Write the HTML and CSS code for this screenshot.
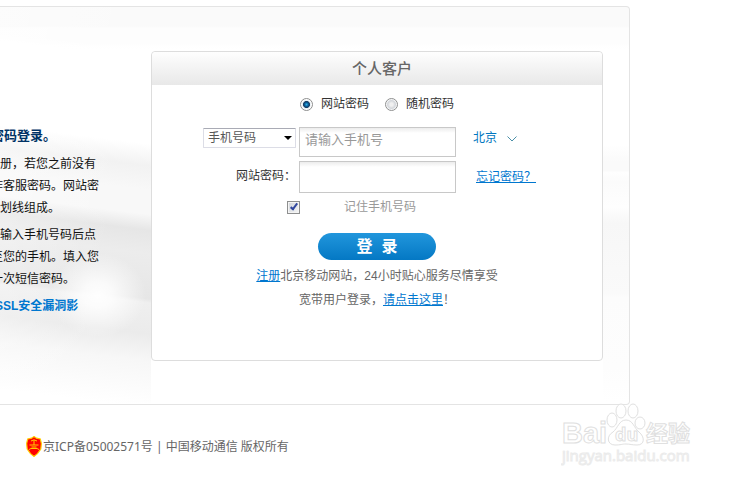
FILE: index.html
```
<!DOCTYPE html>
<html lang="zh-CN">
<head>
    <meta charset="UTF-8">
    <meta name="viewport" content="width=device-width, initial-scale=1.0">
    <title>个人客户登录</title>
    <link rel="stylesheet" href="styles.css">
</head>
<body>

    <div class="main">
        <!-- Notice -->
        <div class="notice">
            <h2>密码登录。</h2>
            <p>
                <span class="line indent">册，若您之前没有</span>
                <span class="line">作客服密码。网站密</span>
                <span class="line indent">划线组成。</span>
            </p>
            <p>
                <span class="line indent">输入手机号码后点</span>
                <span class="line">至您的手机。填入您</span>
                <span class="line">一次短信密码。</span>
            </p>
            <a href="#" class="notice-link">SSL安全漏洞影</a>
        </div>

        <!-- Login box -->
        <div class="login">
            <form class="login-box">
                <h1>个人客户</h1>
                <div class="type-row">
                    <label><input type="radio" name="pwdType" checked>网站密码</label>
                    <label><input type="radio" name="pwdType">随机密码</label>
                </div>
                <div class="fields">
                    <div class="select-wrap">
                        <select id="accountType" aria-label="账号类型">
                            <option>手机号码</option>
                            <option>电子邮箱</option>
                        </select>
                    </div>
                    <input type="text" id="account" aria-label="手机号" placeholder="请输入手机号">
                    <a href="#" class="city">北京
                        <svg width="10" height="6" viewBox="0 0 10 6"><path d="M0.5 0.5 L5 5 L9.5 0.5" fill="none" stroke="#4a8fa8"/></svg>
                    </a>
                    <label class="field-label" for="password">网站密码：</label>
                    <input type="password" id="password">
                    <a href="#" class="forget">忘记密码？</a>
                </div>
                <div class="remember">
                    <input type="checkbox" id="remember" checked>
                    <label for="remember">记住手机号码</label>
                </div>
                <button type="button" class="login-btn">登&nbsp;&nbsp;录</button>
                <p class="tip"><a href="#">注册</a>北京移动网站，24小时贴心服务尽情享受</p>
                <p class="tip">宽带用户登录，<a href="#">请点击这里</a>！</p>
            </form>
        </div>
    </div>

    <!-- Footer -->
    <div class="footer">
        <svg class="badge" width="16" height="21" viewBox="0 0 16 21">
            <path d="M8 0.6 L10.5 2.2 L14.3 3 L15.4 7.5 L14.8 13 L11.5 17.6 L8 20.4 L4.5 17.6 L1.2 13 L0.6 7.5 L1.7 3 L5.5 2.2 Z" fill="#f00" stroke="#fc0" stroke-width="1.2"/>
            <path d="M5 5 L8 3.8 L11 5 M8 4 V9 M3.5 9 H12.5 M5.5 11 H10.5 M3 13.5 L5 12.5 H11 L13 13.5" fill="none" stroke="#fc0"/>
        </svg>
        <span>京ICP备05002571号 | 中国移动通信 版权所有</span>
        <svg class="watermark" width="134" height="66" viewBox="0 0 134 66">
            <g fill="#fff" stroke="#e0e0e0">
                <text x="1" y="40" class="wm-name">Bai</text>
                <path d="M65 17 C58 17 57 25 52 29 C45 33 46 42 54 42 C60 42 61 41 65 41 C69 41 71 42 76 42 C84 42 84 34 78 29 C73 25 72 17 65 17 Z"/>
                <ellipse cx="51" cy="17" rx="5" ry="7"/>
                <ellipse cx="60" cy="8" rx="5" ry="7"/>
                <ellipse cx="72" cy="8" rx="5" ry="7"/>
                <ellipse cx="79" cy="20" rx="5" ry="6"/>
                <text x="54" y="38" class="wm-du">du</text>
                <text x="85" y="38" class="wm-cn">经验</text>
                <text x="1" y="58" class="wm-url">jingyan.baidu.com</text>
            </g>
        </svg>
    </div>

</body>
</html>
```
FILE: styles.css
```
body {
    margin: 0;
    padding-top: 6px;
    font-family: "Liberation Sans", "Noto Sans CJK SC", sans-serif;
    font-size: 12px;
    background-color: #fff;
    color: #666;
}
h1, h2, p {
    margin: 0;
}
a {
    color: #0077cf;
}
.main {
    display: flex;
    margin-right: 104px;
    padding-bottom: 1px;
    border: 1px solid #e4e4e4;
    border-left: none;
    border-radius: 0 4px 4px 0;
    overflow: hidden;
    background: linear-gradient(#fafafa 0, #fafafa 19px, #fdfdfd 21px, #fdfdfd 36px, #fff 42px, #fff 138px, #fafafa 155px, #fafafa 164px, #fefefe 165px, #fbfbfb 175px, #fefefe 200px, #f7f7f7 216px, #fafafa 286px, #fcfcfc 290px, #fdfdfd 360px, #fff 395px);
}

/* Notice */
.notice {
    flex: 0 0 160px;
    box-sizing: border-box;
    margin-left: -9px;
    padding-top: 118px;
    color: #111;
    background:
        radial-gradient(ellipse 48px 42px at 107px 288px, rgba(255, 255, 255, 0.95) 0, rgba(255, 255, 255, 0.8) 30%, rgba(255, 255, 255, 0) 100%),
        linear-gradient(100deg, rgba(255, 255, 255, 0.4), rgba(255, 255, 255, 0) 70%),
        linear-gradient(187deg, #fff0 0, #fff0 42px, #fff 52px, #fff 136px, #f2f2f2 158px, #f8f8f8 182px, #f8f8f8 206px, #e6e6e6 222px, #ececec 245px, #e6e6e6 290px, #efefef 294px, #ebebeb 325px, #f7f7f7 352px, #fff 398px);
}
.notice h2 {
    margin-bottom: 6px;
    font-size: 13px;
    line-height: 22px;
    color: #036;
}
.notice p {
    margin-bottom: 5px;
}
.line {
    display: block;
    line-height: 22px;
    white-space: nowrap;
}
.indent {
    padding-left: 9px;
}
.notice-link {
    display: block;
    padding-left: 4px;
    line-height: 22px;
    font-weight: bold;
    text-decoration: none;
}

/* Login box */
.login {
    flex: 1;
    margin: 44px 26px 0 0;
    padding-bottom: 42px;
    background-color: #fff;
}
.login-box {
    padding-bottom: 48px;
    border: 1px solid #ddd;
    border-radius: 4px;
    background-color: #fff;
}
.login-box h1 {
    padding-left: 10px;
    font-size: 15px;
    font-weight: 500;
    line-height: 33px;
    text-align: center;
    border-radius: 4px 4px 0 0;
    background: linear-gradient(#fefefe, #e8e8e8);
}
.type-row {
    display: flex;
    justify-content: center;
    gap: 16px;
    margin-bottom: 4px;
    line-height: 38px;
    color: #333;
}
.type-row label {
    display: flex;
    align-items: center;
    gap: 8px;
}
.type-row input {
    appearance: none;
    box-sizing: border-box;
    width: 13px;
    height: 13px;
    margin: 0;
    border: 1px solid #8e8f8f;
    border-radius: 50%;
    background: radial-gradient(#f0f0f0 20%, #d2d5da 50%, #fff 70%);
}
.type-row input:checked {
    background: radial-gradient(circle at 50% 50%, #2fb4e8 0, #0c5a94 25%, #153c62 40%, #e8eef2 50%, #fff 65%);
}
.fields {
    display: grid;
    grid-template-columns: 1fr 157px 1fr;
    gap: 4px 3px;
    padding-left: 1px;
}
.fields input {
    box-sizing: border-box;
    width: 100%;
    height: 30px;
    padding: 0 5px 6px;
    border: 1px solid #c8c8c8;
    font: inherit;
    font-size: 13px;
    background: linear-gradient(#ececec, #fff 5px);
}
.fields #password {
    height: 32px;
}
.fields input::placeholder {
    color: #999;
}
.select-wrap {
    position: relative;
    justify-self: end;
    width: 93px;
    padding-top: 1px;
}
.select-wrap::after {
    content: "";
    position: absolute;
    top: 9px;
    right: 4px;
    border: 4px solid transparent;
    border-top-color: #000;
    border-bottom: none;
    pointer-events: none;
}
.select-wrap select {
    appearance: none;
    width: 100%;
    height: 20px;
    padding: 0 4px;
    border: 1px solid #dcdde6;
    border-top-color: #a9abb5;
    border-radius: 1px;
    font: inherit;
    color: #555;
    background-color: #fff;
}
.city {
    padding-left: 14px;
    line-height: 22px;
    color: #0077c0;
    text-decoration: none;
}
.city svg {
    margin-left: 7px;
}
.field-label {
    justify-self: end;
    line-height: 30px;
    color: #333;
}
.forget {
    padding-left: 17px;
    line-height: 32px;
}
.remember {
    display: flex;
    align-items: center;
    gap: 44px;
    padding-left: 30%;
    line-height: 28px;
    color: #999;
}
.remember input {
    appearance: none;
    box-sizing: border-box;
    width: 13px;
    height: 13px;
    margin: 0;
    border: 1px solid #8e8f8f;
    background: linear-gradient(135deg, #cfd3d9, #f6f6f6);
    box-shadow: inset 0 0 0 1px #f4f4f4;
    position: relative;
}
.remember input:checked::after {
    content: "";
    position: absolute;
    left: 4px;
    top: 0;
    width: 2px;
    height: 6px;
    border: solid #31479e;
    border-width: 0 2px 2px 0;
    transform: rotate(38deg);
}
.login-btn {
    display: block;
    width: 118px;
    height: 27px;
    margin: 12px auto 4px;
    padding: 0;
    border: none;
    border-radius: 14px;
    font: inherit;
    font-size: 16px;
    font-weight: bold;
    line-height: 27px;
    color: #fff;
    background: linear-gradient(#2196dc, #0478c4);
    cursor: pointer;
}
.tip {
    line-height: 24px;
    text-align: center;
}

/* Footer */
.footer {
    position: relative;
    display: flex;
    align-items: center;
    gap: 1px;
    padding: 31px 0 25px 26px;
    font-family: "Noto Sans", "Noto Sans CJK SC", sans-serif;
    line-height: 21px;
}
.watermark {
    position: absolute;
    top: -2px;
    right: 39px;
    font-family: "Open Sans", "Noto Sans CJK SC", sans-serif;
    font-weight: bold;
}
.wm-name {
    font-family: "Liberation Sans", sans-serif;
    font-size: 29px;
}
.wm-du {
    font-size: 18px;
}
.wm-cn {
    font-size: 22px;
}
.wm-url {
    font-size: 15px;
    font-weight: normal;
    stroke: #ebebeb;
}
```
